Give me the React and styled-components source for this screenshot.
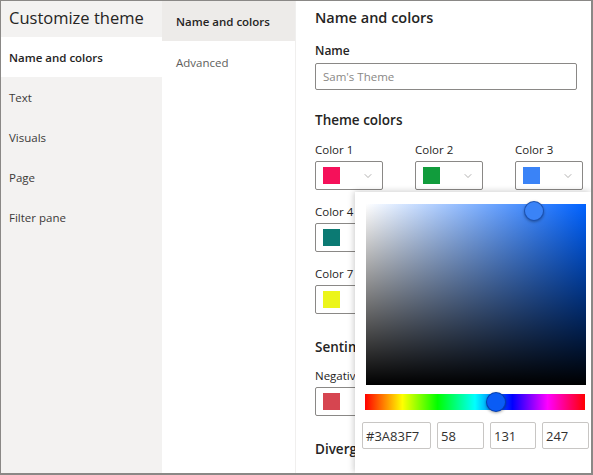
import React from "react";
import styled, { createGlobalStyle } from "styled-components";
import { ChevronDown } from "lucide-react";

const Global = createGlobalStyle`
  html, body { margin: 0; padding: 0; background: #ffffff; }
  * { box-sizing: border-box; }
  body { font-family: "Segoe UI", "Open Sans", "Noto Sans", sans-serif; color: #252423; }
`;

const Frame = styled.div`
  position: relative;
  width: 593px;
  height: 475px;
  overflow: hidden;
  border: 1px solid #8a8886;
  border-right-width: 2px;
  border-bottom-width: 2px;
  display: grid;
  grid-template-columns: 161px 133px 1fr;
`;

const Sidebar = styled.nav`
  background: #f3f2f1;
  display: flex;
  flex-direction: column;
`;

const SideTitle = styled.h1`
  margin: 0;
  height: 36px;
  padding: 5px 0 0 8px;
  font-size: 16.5px;
  font-weight: 400;
  color: #252423;
`;

const SideItem = styled.div`
  height: 40px;
  display: flex;
  align-items: center;
  padding-left: 8px;
  font-size: 11.5px;
  font-weight: ${(p) => (p.$active ? 600 : 400)};
  color: ${(p) => (p.$active ? "#252423" : "#3b3a39")};
  background: ${(p) => (p.$active ? "#ffffff" : "transparent")};
`;

const SubNav = styled.div`
  background: #ffffff;
  display: flex;
  flex-direction: column;
`;

const SubItem = styled.div`
  height: 40px;
  display: flex;
  align-items: center;
  padding-left: 14px;
  font-size: 11.5px;
  font-weight: ${(p) => (p.$active ? 600 : 400)};
  color: ${(p) => (p.$active ? "#252423" : "#605e5c")};
  background: ${(p) => (p.$active ? "#edebe9" : "transparent")};
  padding-top: ${(p) => (p.$active ? "0" : "3px")};
`;

const Content = styled.main`
  border-left: 1px solid #f0efee;
  padding: 6px 0 0 19px;
  display: flex;
  flex-direction: column;
`;

const Title = styled.h2`
  margin: 0 0 13px;
  font-size: 14.5px;
  font-weight: 600;
  line-height: 22px;
  color: #252423;
`;

const Label = styled.div`
  font-size: ${(p) => (p.$strong ? 12 : 11.5)}px;
  font-weight: ${(p) => (p.$strong ? 600 : 400)};
  line-height: 18px;
  color: #252423;
  margin-bottom: ${(p) => (p.$strong ? 3 : 2)}px;
`;

const TextBox = styled.div`
  width: 262px;
  height: 27px;
  border: 1px solid #8a8886;
  border-radius: 2px;
  padding: 0 7px;
  display: flex;
  align-items: center;
  font-size: 11.5px;
  color: #8a8886;
  margin-bottom: 19px;
`;

const Section = styled.h3`
  margin: 0 0 ${(p) => p.$gap || 10}px;
  font-size: 13.5px;
  font-weight: 600;
  line-height: 22px;
  color: #252423;
`;

const ColorGrid = styled.div`
  display: grid;
  grid-template-columns: repeat(3, 100px);
  row-gap: 13px;
  margin-bottom: ${(p) => p.$after}px;
`;

const Field = styled.div`
  display: flex;
  flex-direction: column;
`;

const Picker = styled.div`
  width: 68px;
  height: 29px;
  border: 1px solid #8a8886;
  border-radius: 2px;
  display: flex;
  align-items: center;
  justify-content: space-between;
  padding: 0 8px 0 7px;
  color: #8a8886;
`;

const Swatch = styled.span`
  width: 17px;
  height: 17px;
  background: ${(p) => p.$color};
`;

const Popup = styled.div`
  position: absolute;
  left: 354px;
  top: 191px;
  right: 0;
  bottom: 0;
  background: #ffffff;
  box-shadow: -2px 0 6px rgba(0, 0, 0, 0.12), 0 -2px 6px rgba(0, 0, 0, 0.08);
  padding: 12px 0 0 7px;
  display: flex;
  flex-direction: column;
`;

const Spectrum = styled.div`
  position: relative;
  width: 220px;
  height: 181px;
  margin-left: 4px;
  background: linear-gradient(to top, #000000, rgba(0, 0, 0, 0)),
    linear-gradient(to right, #ffffff, hsl(217, 100%, 50%));
`;

const Thumb = styled.span`
  position: absolute;
  width: 20px;
  height: 20px;
  margin: -10px 0 0 -10px;
  border-radius: 50%;
  background: ${(p) => p.$color};
  border: 1px solid rgba(0, 40, 120, 0.55);
  box-shadow: 0 1px 3px rgba(0, 0, 0, 0.35);
`;

const HueBar = styled.div`
  position: relative;
  width: 220px;
  height: 16px;
  margin: 9px 0 0 3px;
  background: linear-gradient(
    to right,
    #ff0000,
    #ffff00 17%,
    #00ff00 33%,
    #00ffff 50%,
    #0000ff 67%,
    #ff00ff 83%,
    #ff0000
  );
`;

const Inputs = styled.div`
  display: flex;
  gap: 6px;
  margin-top: 12px;
`;

const NumBox = styled.div`
  width: ${(p) => p.$w}px;
  height: 27px;
  border: 1px solid #c8c6c4;
  border-radius: 2px;
  padding: 0 3px;
  display: flex;
  align-items: center;
  font-size: 13px;
  color: #323130;
  flex-shrink: 0;
`;

const ColorField = ({ label, color }) => (
  <Field>
    <Label>{label}</Label>
    <Picker>
      <Swatch $color={color} />
      <ChevronDown size={12} strokeWidth={1.3} />
    </Picker>
  </Field>
);

export default function App() {
  return (
    <>
      <Global />
      <Frame>
        <Sidebar>
          <SideTitle>Customize theme</SideTitle>
          <SideItem $active>Name and colors</SideItem>
          <SideItem>Text</SideItem>
          <SideItem>Visuals</SideItem>
          <SideItem>Page</SideItem>
          <SideItem>Filter pane</SideItem>
        </Sidebar>
        <SubNav>
          <SubItem $active>Name and colors</SubItem>
          <SubItem>Advanced</SubItem>
        </SubNav>
        <Content>
          <Title>Name and colors</Title>
          <Label $strong>Name</Label>
          <TextBox>Sam's Theme</TextBox>
          <Section>Theme colors</Section>
          <ColorGrid $after={22}>
            <ColorField label="Color 1" color="#f5115a" />
            <ColorField label="Color 2" color="#119c3c" />
            <ColorField label="Color 3" color="#3a83f7" />
            <ColorField label="Color 4" color="#0b7a73" />
            <ColorField label="Color 5" color="#f0a020" />
            <ColorField label="Color 6" color="#7a3fb8" />
            <ColorField label="Color 7" color="#ecf51a" />
            <ColorField label="Color 8" color="#d64550" />
          </ColorGrid>
          <Section $gap={9}>Sentiment colors</Section>
          <ColorGrid $after={22}>
            <ColorField label="Negative" color="#d64550" />
            <ColorField label="Neutral" color="#a0a0a0" />
            <ColorField label="Positive" color="#1aab40" />
          </ColorGrid>
          <Section>Diverging colors</Section>
        </Content>
        <Popup>
          <Spectrum>
            <Thumb $color="#3a83f7" style={{ left: "76.5%", top: "4%" }} />
          </Spectrum>
          <HueBar>
            <Thumb $color="#0a5cf5" style={{ left: "59.5%", top: "50%" }} />
          </HueBar>
          <Inputs>
            <NumBox $w={69}>#3A83F7</NumBox>
            <NumBox $w={47}>58</NumBox>
            <NumBox $w={46}>131</NumBox>
            <NumBox $w={47}>247</NumBox>
          </Inputs>
        </Popup>
      </Frame>
    </>
  );
}
